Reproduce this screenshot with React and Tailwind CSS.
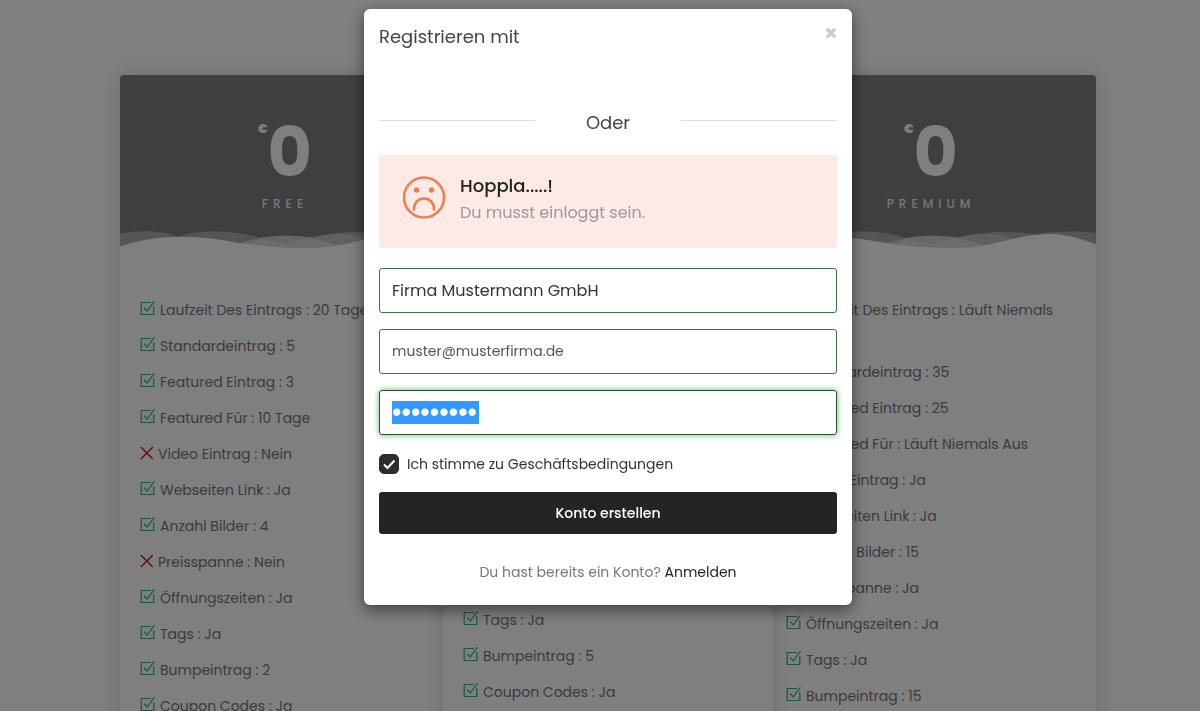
import React, { useState } from 'react';

const plans = [
  {
    name: 'Free',
    price: '0',
    features: [
      ['Laufzeit Des Eintrags : 20 Tage', true],
      ['Standardeintrag : 5', true],
      ['Featured Eintrag : 3', true],
      ['Featured Für : 10 Tage', true],
      ['Video Eintrag : Nein', false],
      ['Webseiten Link : Ja', true],
      ['Anzahl Bilder : 4', true],
      ['Preisspanne : Nein', false],
      ['Öffnungszeiten : Ja', true],
      ['Tags : Ja', true],
      ['Bumpeintrag : 2', true],
      ['Coupon Codes : Ja', true],
    ],
  },
  {
    name: 'Standard',
    price: '0',
    featured: true,
    features: [
      ['Laufzeit Des Eintrags : Läuft Niemals Aus', true],
      ['Standardeintrag : 15', true],
      ['Featured Eintrag : 10', true],
      ['Featured Für : 30 Tage', true],
      ['Video Eintrag : Ja', true],
      ['Webseiten Link : Ja', true],
      ['Anzahl Bilder : 10', true],
      ['Preisspanne : Ja', true],
      ['Öffnungszeiten : Ja', true],
      ['Tags : Ja', true],
      ['Bumpeintrag : 5', true],
      ['Coupon Codes : Ja', true],
    ],
  },
  {
    name: 'Premium',
    price: '0',
    features: [
      ['Laufzeit Des Eintrags : Läuft Niemals Aus', true],
      ['Standardeintrag : 35', true],
      ['Featured Eintrag : 25', true],
      ['Featured Für : Läuft Niemals Aus', true],
      ['Video Eintrag : Ja', true],
      ['Webseiten Link : Ja', true],
      ['Anzahl Bilder : 15', true],
      ['Preisspanne : Ja', true],
      ['Öffnungszeiten : Ja', true],
      ['Tags : Ja', true],
      ['Bumpeintrag : 15', true],
      ['Coupon Codes : Ja', true],
    ],
  },
];

const CheckSquare = () => (
  <svg className="mr-1 inline-block h-4 w-4 align-[-1px]" viewBox="0 0 16 16" fill="none" stroke="#2fae80" strokeWidth="1.2">
    <path d="M11 2.5H1.2V14.5H13.8V6" />
    <path d="M4.2 7.6L7.2 11L14.4 1.2" />
  </svg>
);

const Cross = () => (
  <svg className="mr-1 inline-block h-[14px] w-[14px] align-[-1px]" viewBox="0 0 14 14" fill="none" stroke="#d01818" strokeWidth="1.4">
    <path d="M0.8 1L12.8 13M12.8 1L0.8 13" />
  </svg>
);

const SadFace = () => (
  <svg className="h-[43px] w-[43px] shrink-0" viewBox="0 0 43 43" fill="none" stroke="#f27b51" strokeWidth="2.5">
    <circle cx="21" cy="21.5" r="20" />
    <circle cx="13.5" cy="14" r="2.7" fill="#f27b51" stroke="none" />
    <circle cx="28.5" cy="14" r="2.7" fill="#f27b51" stroke="none" />
    <path d="M11 33.5C11 27 15 22.5 21 22.5S31 27 31 33.5" strokeLinecap="round" />
  </svg>
);

const CloseIcon = () => (
  <svg className="h-3 w-3" viewBox="0 0 12 12" fill="none" stroke="currentColor" strokeWidth="3.4">
    <path d="M1.8 1.8L10.2 10.2M10.2 1.8L1.8 10.2" />
  </svg>
);

const Waves = () => (
  <svg className="block h-[22px] w-full" viewBox="0 0 330 22" preserveAspectRatio="none" fill="#fff">
    <path fillOpacity="0.35" d="M0 2.5C18 -1 42 -0.5 58 5.5C80 -1.5 115 -1.5 140 7C158 3.5 178 4 194 6.5C215 0 245 0 270 3C292 0 312 0 330 2V22H0Z" />
    <path fillOpacity="0.4" d="M118 13.5C145 2 182 1.5 216 13.5L235 22H100Z" />
    <path fillOpacity="0.25" d="M140 7C150 10 160 12 166 13C190 4 215 2 235 4L290 22H120Z" />
    <path d="M0 15.6C28 6 60 3.5 95 8C120 12 145 17 190 17C235 16 245 3 288 3C305 4 318 9 330 13.5V22H0Z" />
  </svg>
);

const PlanCard = ({ plan }) => (
  <article
    className={`flex-1 rounded-t bg-white shadow-[0_0_20px_rgba(50,65,141,0.2)] ${
      plan.featured ? 'relative z-10 -mx-[7px] -mt-10' : ''
    }`}
  >
    <header className="rounded-t bg-[#7e7e7e] pt-[45px] text-center text-white">
      <div className="flex items-start justify-center leading-[66px]">
        <span className="text-xs font-extrabold leading-[18px]">€</span>
        <span className="text-[68px] font-bold">{plan.price}</span>
      </div>
      <h3 className="mt-[9px] pb-[18px] text-xs font-medium uppercase leading-[18px] tracking-[5px] text-[#eee]">{plan.name}</h3>
      <Waves />
    </header>
    <ul className="mt-[39px] px-5 pb-10 text-sm text-[#777]">
      {plan.features.map(([label, included]) => (
        <li key={label} className="py-[5px] leading-[26px]">
          {included ? <CheckSquare /> : <Cross />}
          {label}
        </li>
      ))}
    </ul>
  </article>
);

const RegisterModal = () => {
  const [name, setName] = useState('Firma Mustermann GmbH');
  const [email, setEmail] = useState('muster@musterfirma.de');
  const [accepted, setAccepted] = useState(true);

  return (
    <div
      role="dialog"
      aria-labelledby="register-title"
      className="relative w-full max-w-[488px] rounded-md bg-white px-[15px] pb-5 pt-3 shadow-[0_5px_15px_rgba(0,0,0,0.5)]"
    >
      <div className="flex items-start justify-between">
        <h2 id="register-title" className="text-lg leading-8 text-[#444]">Registrieren mit</h2>
        <button type="button" aria-label="Schließen" className="pt-[6px] text-[#ccc]">
          <CloseIcon />
        </button>
      </div>

      <div className="mt-[54px] flex items-start justify-between">
        <hr className="mt-[13px] w-[34%] border-[#ddd]" />
        <span className="text-lg leading-8 text-[#444]">Oder</span>
        <hr className="mt-[13px] w-[34%] border-[#ddd]" />
      </div>

      <div className="mt-4 flex gap-[14px] rounded-[3px] bg-[#fdeae5] px-6 pb-[22px] pt-[18px]">
        <div className="pt-[3px]">
          <SadFace />
        </div>
        <div>
          <h4 className="text-lg font-medium leading-[26px] text-[#242424]">Hoppla.....!</h4>
          <p className="text-base leading-[27px] text-[#999aa8]">Du musst einloggt sein.</p>
        </div>
      </div>

      <form className="mt-5" onSubmit={(e) => e.preventDefault()}>
        <div className="flex flex-col gap-4">
          <input
            type="text"
            aria-label="Name"
            value={name}
            onChange={(e) => setName(e.target.value)}
            className="h-[45px] w-full rounded-[3px] border border-[#3c763d] px-3 text-base text-[#333] outline-none"
          />
          <input
            type="email"
            aria-label="E-Mail"
            value={email}
            onChange={(e) => setEmail(e.target.value)}
            className="h-[45px] w-full rounded-[3px] border border-[#3c763d] px-3 text-sm text-[#555] outline-none"
          />
          <div className="flex h-[45px] items-center rounded-[3px] border border-[#2b542c] px-3 shadow-[0_0_6px_#67b168]">
            <input
              type="password"
              aria-label="Passwort"
              defaultValue="musterpwd"
              className="h-[23px] w-[87px] bg-[#3399ff] font-['Liberation_Sans',sans-serif] text-[27px] text-white outline-none"
            />
          </div>
        </div>

        <label className="mt-[19px] flex items-center gap-2 text-sm leading-5 text-[#333]">
          <span className="grid h-5 w-5 place-items-center">
            <input
              type="checkbox"
              checked={accepted}
              onChange={(e) => setAccepted(e.target.checked)}
              className="col-start-1 row-start-1 h-5 w-5 appearance-none rounded-[5px] border border-[#2d2d2d] checked:bg-[#2d2d2d]"
            />
            {accepted && (
              <svg className="pointer-events-none col-start-1 row-start-1 h-3 w-3" viewBox="0 0 12 12" fill="none" stroke="#fff" strokeWidth="2">
                <path d="M1 6.5L4.5 10L11.5 2.5" />
              </svg>
            )}
          </span>
          Ich stimme zu Geschäftsbedingungen
        </label>

        <button type="submit" className="mt-[18px] h-[42px] w-full rounded-[3px] bg-[#242424] text-sm font-medium text-white">
          Konto erstellen
        </button>
      </form>

      <p className="mt-[25px] text-center text-sm leading-[26px] text-[#777]">
        Du hast bereits ein Konto? <a href="#login" className="text-[#242424]">Anmelden</a>
      </p>
    </div>
  );
};

export default function App() {
  return (
    <div className="h-screen overflow-hidden bg-white font-['Poppins','Inter',sans-serif]">
      <main className="pl-4 pt-[75px]">
        <div className="mx-auto flex max-w-[976px] items-start">
          {plans.map((plan) => (
            <PlanCard key={plan.name} plan={plan} />
          ))}
        </div>
      </main>
      <div className="fixed inset-0 z-20 flex items-start justify-center bg-black/50 pl-4 pt-[9px]">
        <RegisterModal />
      </div>
    </div>
  );
}
